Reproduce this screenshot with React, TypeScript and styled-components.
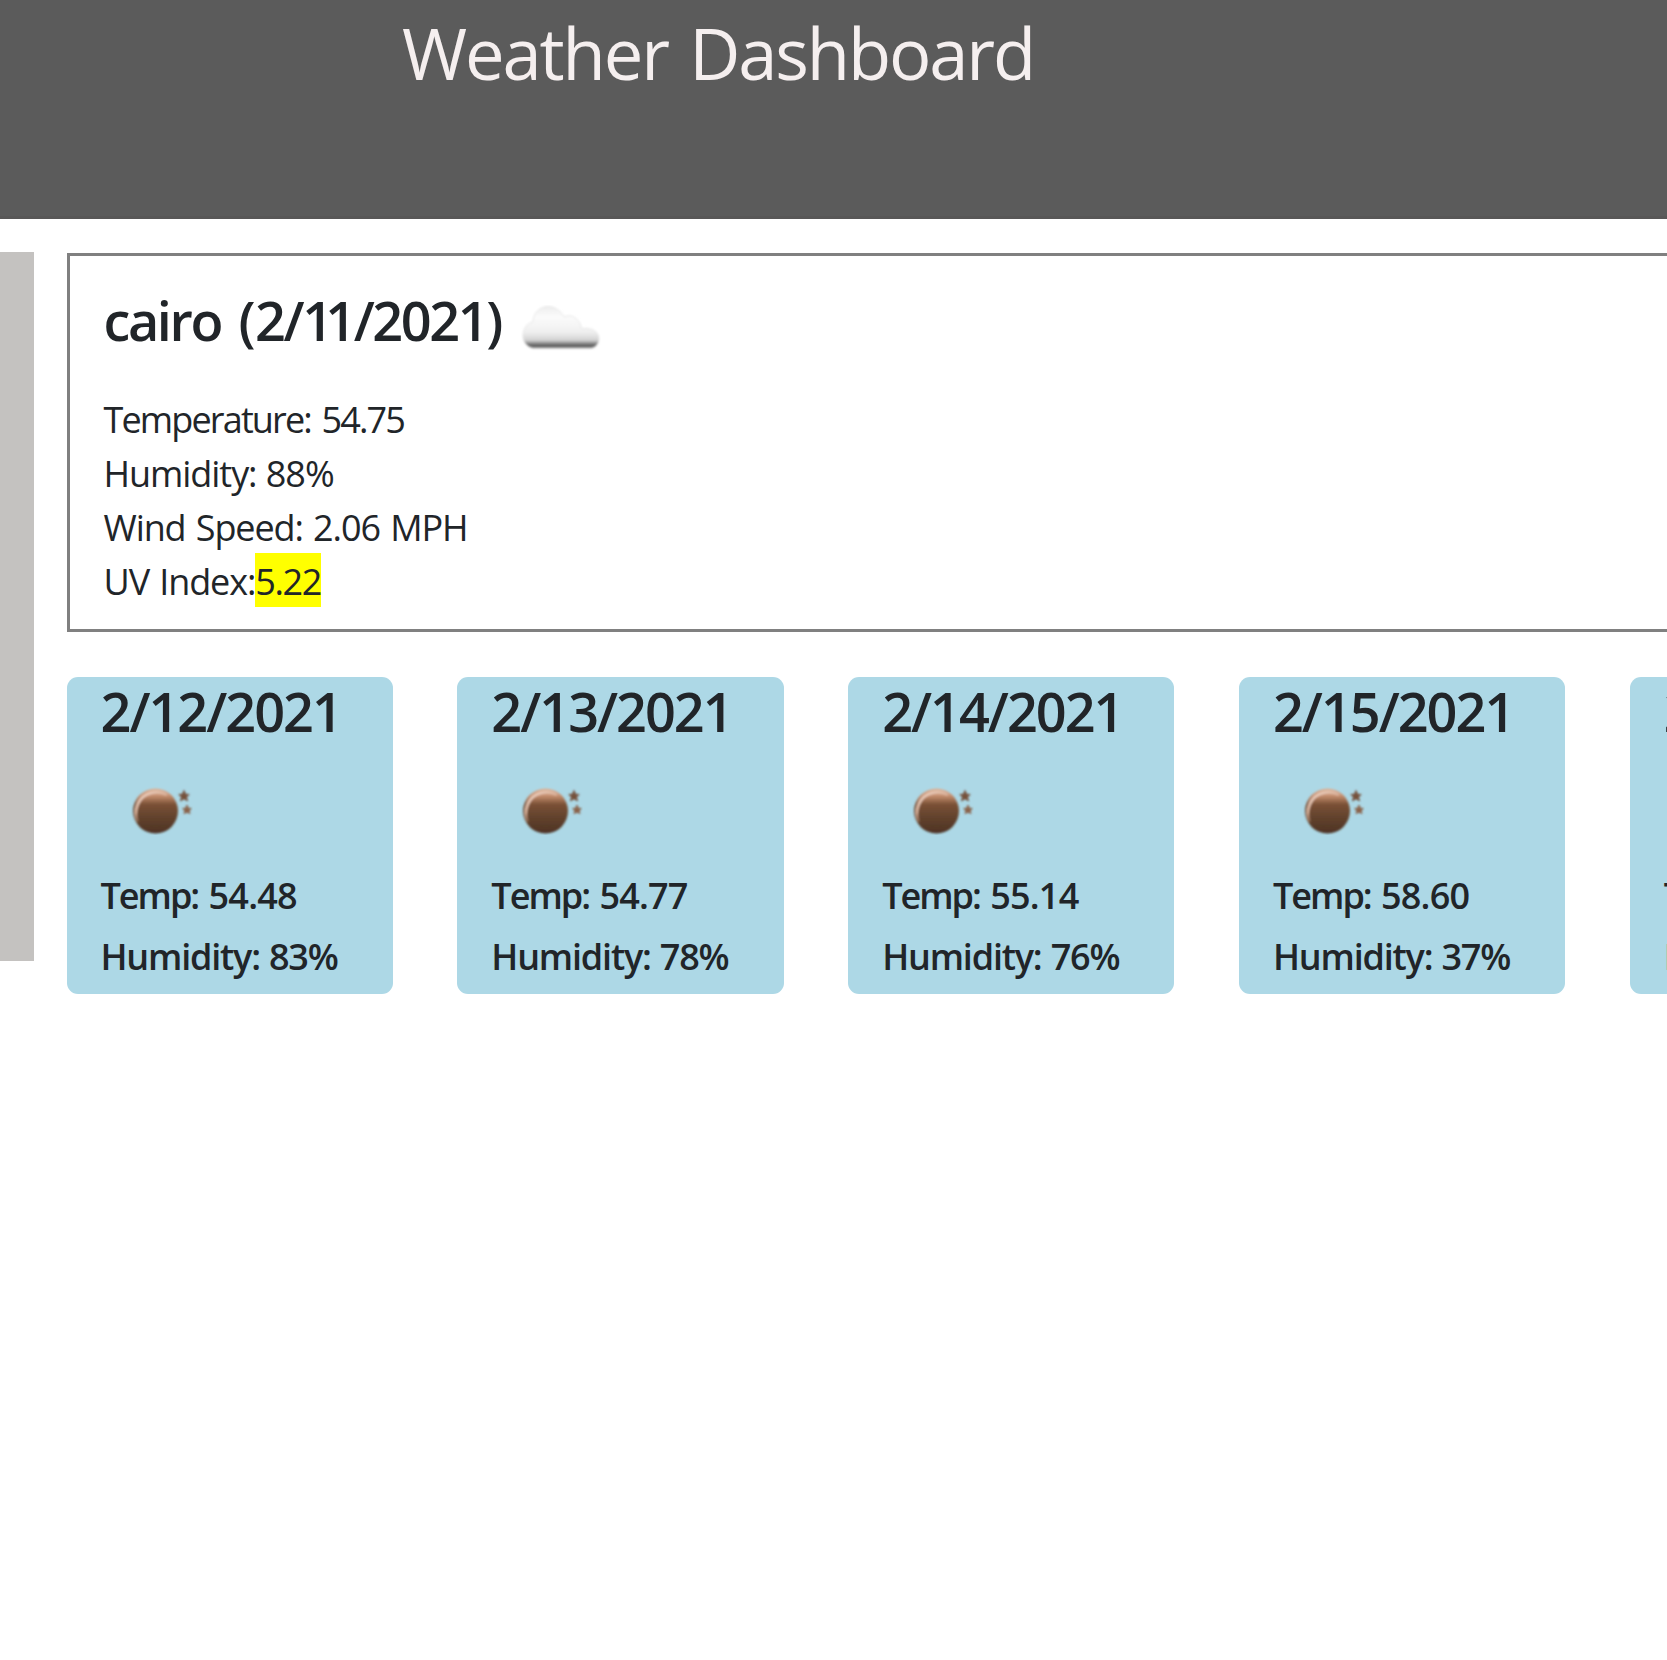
import React from "react";
import styled, { createGlobalStyle } from "styled-components";

const Global = createGlobalStyle`
  * { box-sizing: border-box; }
  html, body { margin: 0; background: #fff; overflow: hidden; }
  body { font-family: "Open Sans", "Noto Sans", sans-serif; font-size: 36px; line-height: 54px; color: #212529; }
  h1, h2, h3, p { margin: 0; }
`;

const Header = styled.header`
  height: 219px;
  padding: 11px 0 0 402px;
  background: #5b5b5b;
  border-bottom: 3px solid #585757;
`;

const Title = styled.h1`
  color: #f5efef;
  font-size: 70.5px;
  font-weight: 400;
  line-height: 84px;
  letter-spacing: -2.1px;
  word-spacing: 5px;
  white-space: nowrap;
`;

const Page = styled.div`
  display: flex;
  align-items: flex-start;
  width: 2100px;
  padding-top: 33px;
`;

const Sidebar = styled.aside`
  width: 34px;
  height: 709px;
  margin-right: 32.5px;
  background: #c4c2c0;
`;

const Main = styled.main`
  flex: 1;
  padding-top: 1px;
`;

const Current = styled.section`
  height: 379px;
  padding: 32px 34px 0;
  border: 3px solid #808080;
`;

const Heading = styled.div`
  display: flex;
  align-items: flex-start;
  height: 103px;
`;

const City = styled.h2`
  font-size: 54px;
  font-weight: 600;
  line-height: 65px;
  letter-spacing: -2.4px;
  word-spacing: 6px;
  white-space: nowrap;
`;

const Bracket = styled.span`
  letter-spacing: -0.6px;
`;

const Tight = styled.span`
  letter-spacing: -8px;
`;

const CloudSlot = styled.span`
  display: flex;
  margin: 17px 0 0 20px;
`;

const Reading = styled.p<{ $tracking: number; $wordGap?: number }>`
  display: flex;
  height: 54px;
  line-height: 58px;
  letter-spacing: ${(p) => p.$tracking}px;
  word-spacing: ${(p) => p.$wordGap ?? 0}px;
  white-space: pre;
`;

const Uv = styled.span`
  letter-spacing: -1.4px;
  background: #ff0;
`;

const Forecast = styled.section`
  display: grid;
  grid-template-columns: repeat(5, 326.2px);
  column-gap: 64.65px;
  margin-top: 45px;
`;

const Day = styled.article`
  height: 317px;
  padding: 2px 0 0 34px;
  border-radius: 11px;
  background: #add8e6;
`;

const DayDate = styled.h3`
  font-size: 54px;
  font-weight: 600;
  line-height: 65px;
  letter-spacing: -2px;
`;

const NightSlot = styled.div`
  display: flex;
  height: 124.5px;
  padding: 41px 0 0 28px;
`;

const Stat = styled.p`
  height: 61px;
  font-weight: 600;
  letter-spacing: -1.2px;
  word-spacing: 1px;
  white-space: nowrap;
`;

const TempLabel = styled.span`
  letter-spacing: -2px;
  word-spacing: 3px;
`;

const TempValue = styled.span`
  letter-spacing: -0.8px;
`;

const Cloud = () => (
  <svg width="80" height="46" viewBox="0 0 80 46">
    <defs>
      <linearGradient id="cloudFill" x1="0" y1="0" x2="0" y2="1">
        <stop offset="0" stopColor="#eeeeee" />
        <stop offset="0.25" stopColor="#fbfbfb" />
        <stop offset="0.6" stopColor="#f0f0f0" />
        <stop offset="0.8" stopColor="#d4d4d4" />
        <stop offset="0.88" stopColor="#8a8a8a" />
        <stop offset="0.93" stopColor="#5c5c5c" />
        <stop offset="1" stopColor="#8a8a8a" />
      </linearGradient>
      <filter id="cloudSoft" x="-5%" y="-5%" width="110%" height="110%">
        <feGaussianBlur stdDeviation="1" />
      </filter>
    </defs>
    <path
      filter="url(#cloudSoft)"
      fill="url(#cloudFill)"
      stroke="#e2e2e2"
      strokeWidth="0.8"
      d="M12 43.500C6 42 2 37 2 31C2 24 6 18 12 17C12 8 19 1.500 27 1.500C34 1.500 40 6 43 12C51 8.500 58 13 61 24C70 21.500 78 27 78 33.500C78 39 74 43.500 69 43.500Z"
    />
  </svg>
);

const Night = () => (
  <svg width="64" height="50" viewBox="0 0 64 50">
    <defs>
      <linearGradient id="moonFill" x1="0" y1="0" x2="0" y2="1">
        <stop offset="0" stopColor="#e0b79d" />
        <stop offset="0.16" stopColor="#c68f70" />
        <stop offset="0.35" stopColor="#7b5136" />
        <stop offset="0.6" stopColor="#65442e" />
        <stop offset="1" stopColor="#4d3324" />
      </linearGradient>
      <linearGradient id="moonShine" x1="0" y1="0" x2="0.6" y2="1">
        <stop offset="0" stopColor="#f4ddd0" />
        <stop offset="0.5" stopColor="#d9b29b" />
        <stop offset="1" stopColor="#8a5c40" stopOpacity="0" />
      </linearGradient>
      <filter id="nightSoft" x="-10%" y="-10%" width="120%" height="120%">
        <feGaussianBlur stdDeviation="0.8" />
      </filter>
    </defs>
    <g filter="url(#nightSoft)">
      <circle cx="26.500" cy="26" r="22.5" fill="url(#moonFill)" />
      <path d="M8.500 37C4 26 9 11 22 8C28 6.500 34 7.500 38 10" fill="none" stroke="url(#moonShine)" strokeWidth="2.6" />
      <path fill="#75503b" stroke="#75503b" d="M55 5.500L56.600 9.300L60.200 9.500L57.400 12L58.600 15.800L55 13.800L51.400 15.800L52.600 12L49.800 9.500L53.400 9.300Z" />
      <path fill="#8a634b" stroke="#8a634b" d="M58 20L59.400 23.300L62.300 23.500L60.200 25.700L61 28.600L58 27.200L55 28.600L55.800 25.700L53.700 23.500L56.600 23.300Z" />
    </g>
  </svg>
);

const readings = [
  { text: "Temperature: 54.75", tracking: -1.85, wordGap: 3 },
  { text: "Humidity: 88%", tracking: -1.05, wordGap: 1 },
  { text: "Wind Speed: 2.06 MPH", tracking: -1.1, wordGap: 2 },
];

const days = [
  { date: "2/12/2021", temp: "54.48", humidity: "83%" },
  { date: "2/13/2021", temp: "54.77", humidity: "78%" },
  { date: "2/14/2021", temp: "55.14", humidity: "76%" },
  { date: "2/15/2021", temp: "58.60", humidity: "37%" },
  { date: "2/16/2021", temp: "59.00", humidity: "40%" },
];

export default function App() {
  return (
    <>
      <Global />
      <Header>
        <Title>Weather Dashboard</Title>
      </Header>
      <Page>
        <Sidebar />
        <Main>
          <Current>
            <Heading>
              <City>
                cairo <Bracket>(</Bracket>2/<Tight>1</Tight>1/2021)
              </City>
              <CloudSlot>
                <Cloud />
              </CloudSlot>
            </Heading>
            {readings.map((r) => (
              <Reading key={r.text} $tracking={r.tracking} $wordGap={r.wordGap}>
                {r.text}
              </Reading>
            ))}
            <Reading $tracking={-1.1} $wordGap={2}>
              UV Index:<Uv>5.22</Uv>
            </Reading>
          </Current>
          <Forecast>
            {days.map((day) => (
              <Day key={day.date}>
                <DayDate>{day.date}</DayDate>
                <NightSlot>
                  <Night />
                </NightSlot>
                <Stat>
                  <TempLabel>Temp: </TempLabel>
                  <TempValue>{day.temp}</TempValue>
                </Stat>
                <Stat>Humidity: {day.humidity}</Stat>
              </Day>
            ))}
          </Forecast>
        </Main>
      </Page>
    </>
  );
}
